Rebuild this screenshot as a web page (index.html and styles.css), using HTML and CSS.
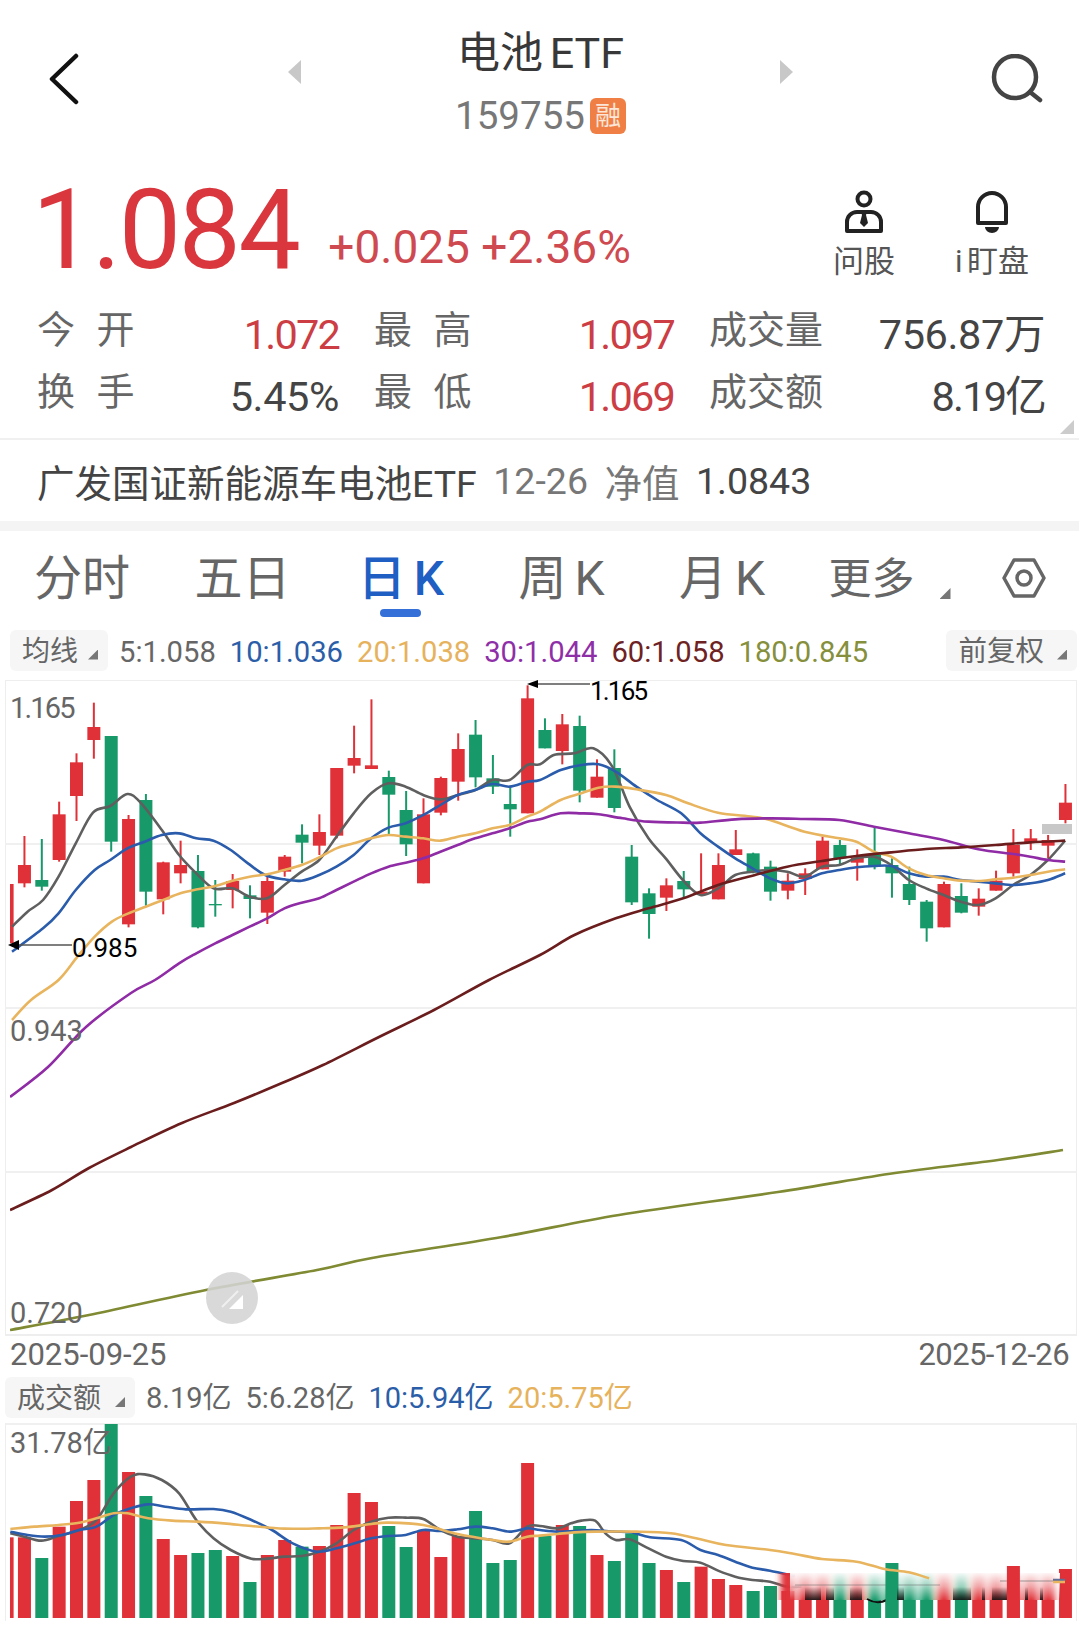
FILE: index.html
```html
<!DOCTYPE html>
<html lang="zh">
  <head>
    <meta charset="utf-8">
    <title>电池ETF 159755</title>
    <link rel="stylesheet" href="styles.css">
  </head>

  <body>
    <div class="page">
      <div class="topbar">
        <svg class="back" width="32" height="52" viewBox="0 0 32 52"><polyline points="28,3 4,26 28,49"/></svg>
        <div class="stock-nav">
          <span class="nav-arrow nav-left"></span>
          <div class="stock-name">
            <div class="name">电池 ETF</div>
            <div class="code">159755<span class="rong">融</span></div>
          </div>
          <span class="nav-arrow nav-right"></span>
        </div>
        <svg class="search" width="54" height="50" viewBox="0 0 54 50"><circle cx="26" cy="23" r="21"/><line x1="41" y1="38" x2="51" y2="46"/></svg>
      </div>

      <div class="price-row">
        <div class="price">1.084</div>
        <div class="change">+0.025 +2.36%</div>
        <div class="actions">
          <div class="action">
            <svg width="42" height="44" viewBox="0 0 42 44"><circle cx="21" cy="9" r="6.500"/><path d="M4 41V32a10 10 0 0 1 10-10H28a10 10 0 0 1 10 10V41z"/><path class="fill" d="M18 22h6l-1 3 2 8-4 4-4-4 2-8z"/></svg>
            <span>问股</span>
          </div>
          <div class="action">
            <svg width="42" height="44" viewBox="0 0 42 44"><path d="M7 33V17a14 14 0 0 1 28 0V33z"/><path class="fill" d="M14 37h14a7 6 0 0 1-14 0z"/></svg>
            <span class="imark">i 盯盘</span>
          </div>
        </div>
      </div>

      <div class="stats">
        <span class="lab">今&nbsp;开</span><span class="val up tight">1.072</span>
        <span class="lab">最&nbsp;高</span><span class="val up tight">1.097</span>
        <span class="lab">成交量</span><span class="val">756.87万</span>
        <span class="lab">换&nbsp;手</span><span class="val">5.45%</span>
        <span class="lab">最&nbsp;低</span><span class="val up tight">1.069</span>
        <span class="lab">成交额</span><span class="val tight">8.19亿</span>
        <i class="corner"></i>
      </div>

      <div class="fund">
        <span>广发国证新能源车电池ETF</span>
        <span class="gray">12-26</span>
        <span class="gray">净值</span>
        <span>1.0843</span>
      </div>

      <div class="band"></div>

      <div class="tabs">
        <span class="tab">分时</span>
        <span class="tab">五日</span>
        <span class="tab active">日 K</span>
        <span class="tab">周 K</span>
        <span class="tab">月 K</span>
        <span class="tab more">更多<i class="tri"></i></span>
        <svg class="gear" width="44" height="42" viewBox="0 0 44 42"><polygon points="2,21 12,3 32,3 42,21 32,39 12,39"/><circle cx="22" cy="21" r="7"/></svg>
      </div>

      <div class="legend ma-row">
        <span class="pick">均线<i class="tri"></i></span>
        <span class="c5">5:1.058</span>
        <span class="c10">10:1.036</span>
        <span class="c20">20:1.038</span>
        <span class="c30">30:1.044</span>
        <span class="c60">60:1.058</span>
        <span class="c180">180:0.845</span>
        <span class="pick right">前复权<i class="tri"></i></span>
      </div>

      <div class="panel kline">
        <svg id="kline" width="1072" height="656" viewBox="5 680 1072 656">
          <defs><clipPath id="kclip"><rect x="10" y="680" width="1067" height="656"/></clipPath></defs>
          <line class="grid" x1="5" y1="844" x2="1077" y2="844"/>
          <line class="grid" x1="5" y1="1008" x2="1077" y2="1008"/>
          <line class="grid" x1="5" y1="1172" x2="1077" y2="1172"/>
          <g id="candles" clip-path="url(#kclip)"></g>
          <line class="mark" x1="530" y1="684" x2="590" y2="684"/>
          <polygon points="527,684 538,680 538,688"/>
          <line class="mark" x1="14" y1="945" x2="72" y2="945"/>
          <polygon points="8,945 19,940 19,950"/>
          <text class="axis tight" x="10" y="718">1.165</text>
          <text class="note tight" x="590" y="700">1.165</text>
          <text class="note" x="72" y="957">0.985</text>
          <text class="axis" x="10" y="1041">0.943</text>
          <text class="axis" x="10" y="1323">0.720</text>
          <circle class="pen" cx="232" cy="1298" r="26"/>
          <path class="pen-mark" d="M243 1295v14h-14z"/>
          <line class="pen-line" x1="222" y1="1307" x2="238" y2="1291"/>
        </svg>
      </div>

      <div class="dates">
        <span>2025-09-25</span>
        <span class="end">2025-12-26</span>
      </div>

      <div class="legend vol-row">
        <span class="pick">成交额<i class="tri"></i></span>
        <span class="c5">8.19亿</span>
        <span class="c5">5:6.28亿</span>
        <span class="c10">10:5.94亿</span>
        <span class="c20">20:5.75亿</span>
      </div>

      <div class="panel volume">
        <svg id="volume" width="1072" height="198" viewBox="5 1423 1072 198">
          <defs>
            <clipPath id="vclip"><rect x="10" y="1423" width="1067" height="198"/></clipPath>
            <filter id="smear" x="-5%" y="-5%" width="110%" height="110%"><feGaussianBlur stdDeviation="3 0"/></filter>
            <linearGradient id="fade" x1="0" y1="0" x2="0" y2="1">
              <stop offset="0" stop-color="#fff" stop-opacity="0.95"/>
              <stop offset="0.5" stop-color="#fff" stop-opacity="0.55"/>
              <stop offset="1" stop-color="#fff" stop-opacity="0"/>
            </linearGradient>
            <linearGradient id="smudge" x1="0" y1="0" x2="0" y2="1">
              <stop offset="0" stop-color="#111" stop-opacity="0"/>
              <stop offset="1" stop-color="#111" stop-opacity="0.9"/>
            </linearGradient>
          </defs>
          <g id="bars" clip-path="url(#vclip)"></g>
          <text class="axis" x="10" y="1453">31.78亿</text>
        </svg>
      </div>
    </div>

    <script src="chart.js"></script>
  </body>
</html>
```

FILE: styles.css
```css
* {
  box-sizing: border-box;
}

body {
  margin: 0;
  background-color: #fff;
  font-family: Roboto, "Noto Sans CJK SC", sans-serif;
  color: #444;
}

.page {
  width: 1079px;
  height: 1626px;
  overflow: hidden;
}

/* top bar */
.topbar {
  height: 148px;
  display: flex;
  align-items: flex-start;
  justify-content: space-between;
  padding: 0 36px 0 48px;
}

.back {
  margin-top: 53px;
}

.back polyline {
  fill: none;
  stroke: #111;
  stroke-width: 4.5;
  stroke-linecap: round;
  stroke-linejoin: round;
}

.search {
  margin-top: 54px;
}

.search circle,
.search line {
  fill: none;
  stroke: #444;
  stroke-width: 4.5;
  stroke-linecap: round;
}

.stock-nav {
  width: 505px;
  height: 148px;
  margin-left: 142px;
  margin-right: 130px;
  display: flex;
  justify-content: space-between;
  align-items: flex-start;
}

.nav-arrow {
  width: 13px;
  height: 24px;
  margin-top: 60px;
  background-color: #c8c8c8;
}

.nav-left {
  clip-path: polygon(100% 0, 100% 100%, 0 50%);
}

.nav-right {
  clip-path: polygon(0 0, 0 100%, 100% 50%);
}

.stock-name {
  display: flex;
  flex-direction: column;
  align-items: center;
}

.name {
  margin-top: 26px;
  font-size: 43px;
  line-height: 54px;
  color: #383838;
  word-spacing: -4px;
}

.code {
  margin-top: 13px;
  font-size: 38.500px;
  line-height: 46px;
  color: #777;
  display: flex;
  align-items: center;
}

.rong {
  width: 36px;
  height: 36px;
  margin-left: 5px;
  border-radius: 6px;
  background-color: #f07f45;
  color: #fbe6d8;
  font-size: 26px;
  line-height: 36px;
  text-align: center;
}

/* price */
.price-row {
  height: 152px;
  padding: 24px 14px 0 32px;
  display: flex;
  align-items: flex-start;
}

.price {
  font-size: 111px;
  line-height: 116px;
  letter-spacing: -2.5px;
  color: #d9363e;
}

.change {
  margin: 48px 0 0 30px;
  font-size: 46px;
  line-height: 54px;
  color: #cf4a50;
}

.actions {
  margin-left: auto;
  margin-right: 35px;
  display: flex;
  gap: 52px;
  margin-top: 18px;
}

.action {
  width: 76px;
  display: flex;
  flex-direction: column;
  align-items: center;
}

.action svg {
  fill: none;
  stroke: #222;
  stroke-width: 4;
  stroke-linejoin: round;
}

.action svg .fill {
  fill: #222;
  stroke: none;
}

.action span {
  margin-top: 9px;
  font-size: 31px;
  line-height: 38px;
  white-space: nowrap;
  color: #555;
}

.action .imark {
  word-spacing: -3px;
}

/* quote table */
.stats {
  position: relative;
  height: 140px;
  padding: 6px 35px 0 37px;
  display: grid;
  grid-template-columns: 100px 201px 100px 235px 115px 1fr;
  grid-auto-rows: 62px;
  column-gap: 0;
  border-bottom: 2px solid #f0f0f0;
}

.lab {
  font-size: 38px;
  line-height: 48px;
  color: #666;
  word-spacing: 12px;
  white-space: nowrap;
}

.val {
  padding-top: 5px;
  font-size: 41.500px;
  line-height: 48px;
  text-align: right;
  color: #444;
  margin-right: -1px;
  letter-spacing: -0.4px;
  white-space: nowrap;
}

.val.tight {
  letter-spacing: -1.800px;
}

.val.up {
  color: #cc3d44;
}

.stats .lab:nth-child(3),
.stats .lab:nth-child(9),
.stats .lab:nth-child(5),
.stats .lab:nth-child(11) {
  margin-left: 36px;
}

.corner {
  position: absolute;
  right: 5px;
  top: 120px;
  width: 14px;
  height: 14px;
  background-color: #ccc;
  clip-path: polygon(100% 0, 100% 100%, 0 100%);
}

/* fund line */
.fund {
  height: 81px;
  padding-left: 37px;
  display: flex;
  align-items: center;
  gap: 16.500px;
  font-size: 37.500px;
  color: #444;
}

.gray {
  color: #777;
}

.band {
  height: 10px;
  background-color: #f4f4f4;
}

/* tabs */
.tabs {
  height: 89px;
  padding: 0 33px 0 34px;
  display: flex;
  align-items: flex-start;
}

.tab {
  width: 92px;
  margin-right: 68.500px;
  font-size: 48px;
  line-height: 52px;
  margin-top: 22px;
  color: #666;
  word-spacing: -4px;
  white-space: nowrap;
  text-align: center;
  position: relative;
}

.tab.active {
  color: #1f5fc4;
  font-weight: 500;
}

.tab.active::after {
  content: "";
  position: absolute;
  left: 25px;
  top: 56px;
  width: 41px;
  height: 8px;
  border-radius: 4px;
  background-color: #3570d8;
}

.tab.more {
  margin-left: -8px;
  margin-right: 0;
  width: 122px;
  font-size: 43px;
  text-align: left;
}

.tri {
  position: absolute;
  right: 0;
  bottom: 6px;
  width: 11px;
  height: 11px;
  background-color: #777;
  clip-path: polygon(100% 0, 100% 100%, 0 100%);
}

.gear {
  margin-left: auto;
  margin-top: 26px;
}

.gear polygon,
.gear circle {
  fill: none;
  stroke: #666;
  stroke-width: 3.5;
  stroke-linejoin: round;
}

/* legends */
.legend {
  display: flex;
  align-items: center;
  gap: 14px;
  font-size: 29.200px;
  white-space: nowrap;
}

.ma-row {
  height: 60px;
  padding: 0 2px 0 10px;
}

.ma-row span:not(.pick) {
  margin-top: 3px;
}

.ma-row .pick {
  margin-right: -3px;
}

.vol-row {
  height: 51px;
  padding-left: 5px;
  font-size: 29px;
}

.vol-row .pick {
  padding-right: 34px;
  margin-right: -3px;
}

.vol-row span:not(.pick) {
  margin-top: -5px;
}

.pick {
  position: relative;
  height: 41px;
  padding: 0 30px 0 12px;
  border-radius: 6px;
  background-color: #f6f6f6;
  color: #666;
  font-size: 28px;
  line-height: 44px;
}

.pick .tri {
  right: 10px;
  bottom: 11px;
  width: 10px;
  height: 10px;
}

.pick.right {
  margin-left: auto;
  margin-right: 0;
  padding-left: 12px;
  padding-right: 33px;
  font-size: 28.500px;
}

.c5 {
  color: #666;
}

.c10 {
  color: #2b5ea8;
}

.c20 {
  color: #e6b25c;
}

.c30 {
  color: #8f2fa8;
}

.c60 {
  color: #6e2222;
}

.c180 {
  color: #858f3c;
}

/* chart panels */
.panel {
  margin-left: 5px;
  width: 1072px;
  position: relative;
}

.panel svg {
  display: block;
  overflow: visible;
}

.kline {
  height: 656px;
  border-top: 1px solid #eee;
  border-bottom: 2px solid #eee;
}

.kline svg,
.volume svg {
  position: absolute;
  left: 0;
  top: -1px;
  box-shadow: inset 1px 0 #eee, inset -1px 0 #eee;
}

.volume {
  height: 198px;
  border-top: 2px solid #f0f0f0;
}

.volume svg {
  top: -2px;
}

.panel text {
  font-family: Roboto, "Noto Sans CJK SC", sans-serif;
  font-size: 29px;
  fill: #000;
}

.panel text.axis {
  fill: #666;
}

.panel text.note {
  font-size: 26px;
}

.panel text.tight {
  letter-spacing: -1.800px;
}

.grid {
  stroke: #f0f0f0;
  stroke-width: 2;
}

.mark {
  stroke: #555;
  stroke-width: 1.500;
}

.pen {
  fill: #d4d4d4;
  opacity: 0.88;
}

.pen-mark {
  fill: #fff;
}

.pen-line {
  stroke: #fff;
  stroke-width: 2;
  opacity: 0.6;
}

.dates {
  height: 36px;
  padding: 0 10px;
  display: flex;
  justify-content: space-between;
  align-items: center;
  font-size: 31px;
  color: #666;
}

.dates .end {
  letter-spacing: -0.600px;
}
```

FILE: chart.js
```js
// pixel helpers: the series below were read off the screen in 3x steps
const SVG = "http://www.w3.org/2000/svg";
const RED = "#e03138";
const GREEN = "#17996a";

function cx(i) {
  return 7.1 + 17.35 * i;
}

function add(parent, tag, attrs) {
  const el = document.createElementNS(SVG, tag);
  for (const k in attrs) el.setAttribute(k, attrs[k]);
  parent.appendChild(el);
  return el;
}

// smooth line through points (catmull-rom)
function smooth(p) {
  let d = `M${p[0][0]} ${p[0][1]}`;
  for (let i = 0; i < p.length - 1; i++) {
    const a = p[i - 1] || p[i];
    const b = p[i];
    const c = p[i + 1];
    const e = p[i + 2] || c;
    const c1x = b[0] + (c[0] - a[0]) / 6;
    const c1y = b[1] + (c[1] - a[1]) / 6;
    const c2x = c[0] - (e[0] - b[0]) / 6;
    const c2y = c[1] - (e[1] - b[1]) / 6;
    d += `C${c1x} ${c1y} ${c2x} ${c2y} ${c[0]} ${c[1]}`;
  }
  return d;
}

// left half, right half of the picture; y runs from "top" in 3x steps
function series(page, left, right, top) {
  const out = page.slice();
  for (let i = 0; i < left.length; i += 2) {
    out.push([left[i] / 2.904, top + left[i + 1] / 3]);
  }
  for (let i = 0; i < right.length; i += 2) {
    out.push([540 + right[i] / 2.904, top + right[i + 1] / 3]);
  }
  return out;
}

function drawLine(parent, pts, color, width) {
  add(parent, "path", {
    d: smooth(pts),
    fill: "none",
    stroke: color,
    "stroke-width": width || 2.6,
    "stroke-linejoin": "round",
  });
}

// r/g, wick top, body top, body bottom, wick bottom
const candles = [
  ["r", 1062, 1062, 1240, 1240], ["r", 918, 1005, 1060, 1072], ["g", 927, 1050, 1070, 1082],
  ["r", 815, 853, 990, 995], ["r", 670, 697, 798, 873], ["r", 518, 591, 630, 686],
  ["g", 618, 618, 935, 965], ["r", 855, 867, 1183, 1192], ["g", 792, 810, 1085, 1127],
  ["r", 995, 997, 1108, 1153], ["r", 932, 1005, 1030, 1060], ["g", 975, 1023, 1192, 1195],
  ["g", 1050, 1122, 1126, 1160], ["r", 1032, 1053, 1080, 1135], ["g", 1066, 1096, 1107, 1165],
  ["r", 1040, 1053, 1148, 1182], ["r", 975, 980, 1025, 1040], ["g", 883, 914, 938, 1000],
  ["r", 853, 906, 947, 975], ["r", 714, 714, 917, 925], ["r", 587, 684, 707, 730],
  ["r", 508, 706, 717, 717], ["g", 722, 741, 794, 912], ["g", 783, 840, 943, 978],
  ["r", 805, 853, 1060, 1060], ["r", 740, 744, 848, 856], ["r", 610, 657, 755, 812],
  ["g", 570, 614, 742, 772], ["g", 675, 745, 770, 792], ["g", 770, 822, 838, 920],
  ["r", 466, 505, 850, 850], ["g", 565, 600, 655, 655], ["r", 552, 583, 663, 703],
  ["g", 557, 588, 782, 817], ["r", 688, 740, 803, 803], ["g", 658, 714, 834, 847],
  ["g", 945, 980, 1117, 1125], ["g", 1075, 1090, 1152, 1226], ["r", 1045, 1066, 1103, 1143],
  ["g", 1023, 1053, 1078, 1103], ["r", 970, 1085, 1092, 1095], ["r", 970, 1005, 1108, 1108],
  ["r", 900, 958, 975, 975], ["g", 968, 970, 1028, 1030], ["g", 992, 1010, 1085, 1112],
  ["r", 1030, 1052, 1082, 1108], ["r", 1015, 1030, 1047, 1095], ["r", 920, 932, 1018, 1018],
  ["g", 930, 945, 985, 1007], ["r", 958, 982, 998, 1052], ["g", 892, 975, 1010, 1018],
  ["g", 985, 1005, 1030, 1103], ["g", 1010, 1062, 1110, 1125], ["g", 1110, 1115, 1195, 1235],
  ["r", 1055, 1062, 1192, 1192], ["g", 1060, 1098, 1148, 1150], ["r", 1075, 1106, 1130, 1157],
  ["r", 1022, 1052, 1082, 1082], ["r", 897, 945, 1030, 1040], ["r", 897, 925, 938, 960],
  ["r", 915, 930, 947, 985], ["r", 762, 818, 870, 880],
];

const kGroup = document.getElementById("candles");

candles.forEach((c, i) => {
  const x = cx(i);
  const color = c[0] === "r" ? RED : GREEN;
  const y = (v) => 530 + v / 3;
  add(kGroup, "rect", { x: x - 1, y: y(c[1]), width: 2, height: (c[4] - c[1]) / 3, fill: color });
  add(kGroup, "rect", { x: x - 6.5, y: y(c[2]), width: 13, height: (c[3] - c[2]) / 3, fill: color });
});

// gray tag near the last candle
add(kGroup, "rect", { x: 1042, y: 824, width: 30, height: 10, fill: "#c8c8c8" });

drawLine(kGroup, series([], [
  35, 1190, 80, 1145, 125, 1110, 170, 1040, 220, 940, 270, 848, 320, 828, 370, 792, 410, 820, 470, 900,
  520, 975, 570, 1030, 620, 1075, 675, 1075, 725, 1100, 776, 1105, 826, 1065, 876, 1025, 927, 990, 977, 920,
  1027, 850, 1078, 790, 1128, 760, 1178, 770, 1229, 795, 1279, 808, 1329, 795, 1380, 780, 1430, 750, 1480, 750,
  1531, 705,
], [
  0, 703, 40, 675, 100, 670, 155, 655, 210, 710, 260, 830, 315, 925, 365, 985, 415, 1050, 466, 1095,
  517, 1075, 567, 1035, 617, 1025, 668, 1020, 718, 1025, 768, 1040, 819, 1010, 869, 1005, 919, 985, 970, 980,
  1020, 1005, 1071, 1050, 1121, 1075, 1172, 1095, 1222, 1115, 1273, 1125, 1323, 1105, 1374, 1065, 1424, 1035,
  1475, 990, 1525, 932,
], 530), "#5f5f5f");

drawLine(kGroup, series([], [
  35, 1265, 125, 1195, 170, 1150, 220, 1080, 275, 1020, 320, 990, 370, 955, 420, 935, 470, 915, 520, 910,
  570, 925, 620, 932, 670, 960, 720, 1000, 770, 1035, 826, 1048, 876, 1052, 927, 1035, 977, 1010, 1027, 975,
  1078, 925, 1128, 893, 1178, 880, 1229, 855, 1279, 825, 1329, 795, 1380, 780, 1430, 762, 1480, 770, 1531, 755,
], [
  0, 750, 60, 720, 120, 705, 170, 703, 220, 725, 280, 770, 340, 810, 410, 850, 466, 910, 517, 950,
  567, 985, 617, 1015, 668, 1045, 718, 1060, 768, 1050, 819, 1030, 869, 1020, 919, 1012, 970, 1008, 1020, 1008,
  1071, 1030, 1121, 1040, 1172, 1040, 1222, 1050, 1273, 1055, 1323, 1060, 1374, 1065, 1424, 1060, 1475, 1050,
  1525, 1030,
], 530), "#2a5cab");

drawLine(kGroup, series([[12, 1020], [31, 1000]], [
  170, 1350, 225, 1280, 275, 1220, 325, 1175, 373, 1150, 423, 1130, 474, 1110, 524, 1090, 574, 1078, 625, 1068,
  675, 1052, 725, 1040, 776, 1033, 826, 1020, 876, 1005, 927, 982, 977, 955, 1027, 940, 1078, 925, 1128, 915,
  1178, 920, 1229, 925, 1279, 932, 1329, 920, 1380, 910, 1430, 895, 1480, 885, 1531, 860,
], [
  0, 845, 60, 810, 120, 790, 170, 773, 220, 770, 280, 778, 366, 795, 430, 820, 517, 848, 617, 860,
  668, 870, 768, 905, 869, 925, 919, 935, 970, 965, 1020, 980, 1071, 1015, 1121, 1035, 1172, 1045, 1222, 1052,
  1273, 1053, 1323, 1048, 1374, 1043, 1424, 1035, 1475, 1025, 1525, 1018,
], 530), "#e8b45e");

drawLine(kGroup, series([[10, 1097], [48, 1067], [86, 1027], [131, 993]], [
  450, 1350, 520, 1300, 570, 1270, 625, 1240, 675, 1215, 725, 1190, 776, 1165, 826, 1135, 876, 1118, 927, 1105,
  977, 1080, 1027, 1055, 1078, 1030, 1128, 1010, 1178, 998, 1229, 985, 1279, 965, 1329, 945, 1380, 925, 1430, 910,
  1480, 895, 1531, 875,
], [
  0, 868, 60, 850, 120, 850, 170, 853, 240, 865, 315, 875, 416, 878, 466, 878, 567, 868, 668, 865,
  768, 867, 869, 870, 970, 890, 1071, 910, 1172, 930, 1273, 958, 1374, 972, 1424, 980, 1475, 990, 1525, 995,
], 530), "#8f2ba5");

drawLine(kGroup, series([
  [10, 1210], [52, 1190], [89, 1168], [131, 1147], [182, 1123], [234, 1103], [282, 1083], [323, 1065],
  [379, 1037], [434, 1010], [489, 980],
], [], [
  0, 1275, 100, 1215, 220, 1165, 315, 1135, 416, 1105, 517, 1065, 617, 1037, 718, 1010, 819, 993, 919, 978,
  1020, 967, 1121, 957, 1222, 952, 1323, 945, 1424, 937, 1525, 932,
], 530), "#6b1d1d");

drawLine(kGroup, [
  [10, 1330], [89, 1315], [206, 1290], [317, 1270], [372, 1258], [502, 1237], [619, 1215], [778, 1192],
  [895, 1173], [998, 1160], [1063, 1150],
], "#7f8a32");

// volume: r/g + bar top. tops under the smudge start at 1600
const bars = [
  "r622", "r622", "g684", "r590", "r513", "r450", "g282", "r426", "g498", "r627", "r675", "g669", "g660",
  "r678", "g756", "r675", "r630", "g650", "r648", "r585", "r489", "r516", "g588", "g651", "r603", "r681",
  "r618", "g543", "g699", "g690", "r399", "g618", "r585", "g588", "r675", "g693", "g610", "g699", "r720",
  "g756", "r710", "r747", "r765", "g783", "g768", "r783", "r810", "r810", "g810", "r810", "g810", "g810",
  "g810", "g810", "r810", "g810", "r810", "r810", "r810", "r810", "r810", "r717",
];

const vGroup = document.getElementById("bars");
const BOTTOM = 1618;

function barColor(b) {
  return b[0] === "r" ? RED : GREEN;
}

bars.forEach((b, i) => {
  const top = 1330 + Number(b.slice(1)) / 3;
  add(vGroup, "rect", { x: cx(i) - 6.5, y: top, width: 13, height: BOTTOM - top, fill: barColor(b) });
});

drawLine(vGroup, series([], [
  30, 610, 70, 620, 120, 632, 170, 618, 230, 600, 280, 570, 330, 490, 380, 440, 420, 433, 470, 450,
  520, 490, 570, 570, 620, 625, 670, 660, 730, 686, 776, 686, 826, 680, 876, 678, 927, 665, 977, 640,
  1027, 600, 1078, 575, 1128, 563, 1178, 563, 1229, 567, 1279, 600, 1329, 620, 1380, 625, 1430, 630, 1480, 640,
  1531, 590,
], [
  0, 588, 50, 595, 90, 580, 120, 572, 160, 572, 190, 610, 220, 630, 260, 628, 315, 655, 366, 680,
  416, 693, 466, 698, 517, 722, 567, 740, 617, 750, 668, 755, 718, 770, 760, 770,
], 1330), "#5f5f5f");

drawLine(vGroup, series([], [
  30, 605, 80, 615, 130, 620, 180, 615, 230, 600, 280, 590, 330, 555, 380, 535, 430, 523, 480, 530,
  540, 538, 620, 537, 670, 545, 730, 570, 790, 600, 850, 640, 920, 665, 977, 655, 1030, 640, 1078, 625,
  1128, 618, 1178, 615, 1229, 600, 1279, 603, 1329, 598, 1380, 590, 1430, 595, 1480, 605, 1531, 595,
], [
  0, 600, 50, 605, 100, 603, 150, 600, 210, 605, 265, 607, 320, 622, 410, 630, 466, 660, 517, 675,
  567, 695, 617, 713, 668, 722, 740, 738,
], 1330), "#2a5cab");

// smudged watermark at the bottom right: blurred bars, faded upward
const smear = add(vGroup, "g", { filter: "url(#smear)" });
for (let i = 45; i <= 60; i++) {
  add(smear, "rect", { x: cx(i) - 7, y: 1573, width: 14, height: 27, fill: barColor(bars[i]) });
}
add(vGroup, "rect", { x: 790, y: 1573, width: 270, height: 27, fill: "url(#fade)" });

// dark streaks that run along the hard edge of the smudge
[[805, 16], [826, 8], [850, 12], [953, 18], [982, 3], [992, 26], [1025, 3], [1040, 3]].forEach((s) => {
  add(vGroup, "rect", { x: s[0], y: 1587, width: s[1], height: 13, fill: "url(#smudge)" });
});
add(vGroup, "line", { x1: 795, y1: 1585, x2: 940, y2: 1585, stroke: "#666", "stroke-width": 2, opacity: 0.25 });
add(vGroup, "line", { x1: 1000, y1: 1581, x2: 1055, y2: 1581, stroke: "#666", "stroke-width": 2, opacity: 0.3 });
add(vGroup, "path", { d: "M867 1599q10 6 20 1", fill: "none", stroke: "#111", "stroke-width": 2 });

// the two bars that poke out above the smudge
[[51, 1563], [58, 1566]].forEach((s) => {
  add(vGroup, "rect", { x: cx(s[0]) - 6.5, y: s[1], width: 13, height: BOTTOM - s[1], fill: barColor(bars[s[0]]) });
});
add(vGroup, "rect", { x: 897, y: 1587, width: 7, height: 13, fill: "url(#smudge)" });

drawLine(vGroup, series([], [
  30, 597, 100, 590, 170, 585, 230, 578, 280, 565, 330, 550, 370, 550, 430, 565, 500, 572, 574, 575,
  650, 580, 730, 588, 826, 596, 927, 595, 1000, 592, 1078, 582, 1128, 578, 1229, 585, 1329, 612, 1430, 630,
  1480, 635, 1531, 620,
], [
  0, 617, 50, 612, 100, 607, 160, 605, 280, 605, 380, 610, 466, 628, 540, 645, 668, 660, 740, 672,
  819, 687, 919, 695, 1000, 717, 1071, 727, 1130, 745,
], 1330), "#e8b45e");

add(vGroup, "line", { x1: 1053, y1: 1580, x2: 1065, y2: 1580, stroke: "#5f6f9a", "stroke-width": 2.5 });
add(vGroup, "line", { x1: 1053, y1: 1582, x2: 1065, y2: 1582, stroke: "#e8b45e", "stroke-width": 2.5 });
```
